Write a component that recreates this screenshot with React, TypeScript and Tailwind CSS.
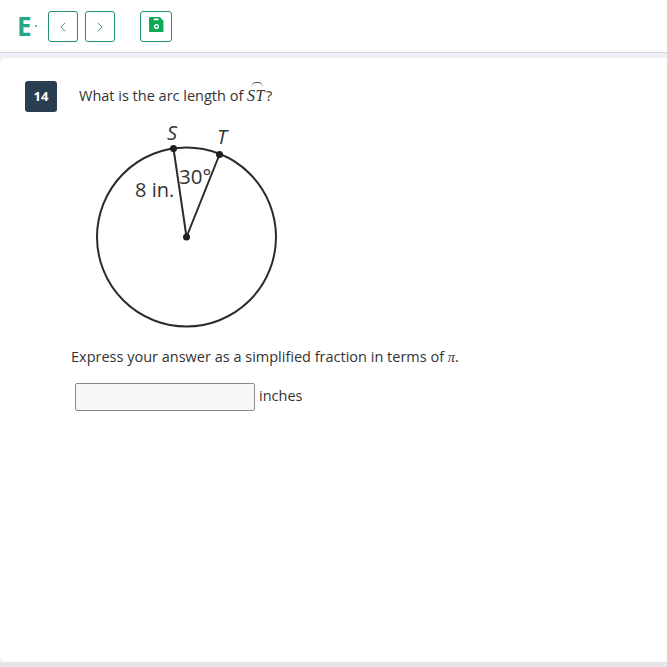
import { ChevronLeft, ChevronRight } from 'lucide-react';

function SaveIcon() {
  return (
    <svg width="15" height="15" viewBox="0 0 14 14">
      <path fillRule="evenodd" fill="#0fa958" d="M1 0h9l3.500 3.500v9.500a1 1 0 0 1-1 1H1a1 1 0 0 1-1-1V1a1 1 0 0 1 1-1zM4.500 1.300v1.700h4.500V1.300zM7 6.500a2.400 2.400 0 1 0 0 4.800a2.400 2.400 0 0 0 0-4.800zM7 7.800a1.100 1.100 0 1 1 0 2.200a1.100 1.100 0 0 1 0-2.200z" />
    </svg>
  );
}

function Diagram() {
  return (
    <svg width="200" height="216" viewBox="0 -6 200 216" className="block">
      <circle cx="106.500" cy="115" r="89.500" fill="none" stroke="#2b2b2b" strokeWidth="2" />
      <path d="M93.500 26.500 L106.500 115 L139.500 32.500" fill="none" stroke="#2b2b2b" strokeWidth="2" />
      <circle cx="93.500" cy="26.500" r="3.500" fill="#1f1f1f" />
      <circle cx="139.500" cy="32.500" r="3.500" fill="#1f1f1f" />
      <circle cx="106.500" cy="115" r="3.500" fill="#1f1f1f" />
      <text x="87" y="18" fontSize="20" fontStyle="italic" fill="#333" fontFamily="'Open Sans', sans-serif">S</text>
      <text x="137" y="22" fontSize="20" fontStyle="italic" fill="#333" fontFamily="'Open Sans', sans-serif">T</text>
      <text x="55" y="75" fontSize="20" fill="#333" fontFamily="'Open Sans', sans-serif">8 in.</text>
      <text x="99" y="62" fontSize="20.500" fill="#333" fontFamily="'Open Sans', sans-serif">30°</text>
    </svg>
  );
}

export default function App() {
  return (
    <div className="h-[667px] w-[667px] flex flex-col overflow-hidden bg-[#f0eff5] font-['Open_Sans',sans-serif] text-[#333333]">
      {/* Top bar */}
      <div className="h-[53px] shrink-0 flex items-center bg-white border-b border-[#d6d6dc] pl-[17px] pb-[1px]">
        <span className="text-[26px] leading-none font-bold text-[#22a884] w-[14px]">E</span>
        <span className="w-[2px] h-[2px] ml-[4px] rounded-full bg-[#22a884]" />
        <div className="flex gap-[7px] ml-[11px] mt-[1px]">
          <button className="w-[30px] h-[31px] flex items-center justify-center rounded-[3px] border border-[#1f8f6f] text-[#4f9c86]">
            <ChevronLeft size={16} strokeWidth={1.5} className="mt-[1px]" />
          </button>
          <button className="w-[30px] h-[31px] flex items-center justify-center rounded-[3px] border border-[#1f8f6f] text-[#4f9c86]">
            <ChevronRight size={16} strokeWidth={1.5} className="mt-[1px]" />
          </button>
        </div>
        <button className="w-[32px] h-[31px] mt-[1px] ml-[25px] flex items-center justify-center rounded-[3px] border border-[#1f8f6f] pb-[3px]">
          <SaveIcon />
        </button>
      </div>

      {/* Question card */}
      <div className="mt-[5px] h-[604px] shrink-0 bg-white rounded-l-[6px] pt-[23px]">
        <div className="flex items-center pl-[25px]">
          <div className="w-[32px] h-[31px] flex items-center justify-center rounded-[3px] bg-[#2b3e50] text-white text-[13px] font-bold">14</div>
          <p className="ml-[22px] mb-[2px] text-[14.500px] leading-[20px]">
            What is the arc length of{' '}
            <span className="relative font-['Liberation_Serif',serif] italic text-[16px] tracking-[0.5px] mr-[1px]">
              ST
              <span className="absolute left-[4px] top-[-5px] w-[12px] h-[5px] rounded-t-full border-t border-[#555555]" />
            </span>
            ?
          </p>
        </div>
        <div className="ml-[80px] mt-[4px]">
          <Diagram />
        </div>
        <p className="ml-[71px] mt-[15px] text-[14.500px] leading-[20px]">
          Express your answer as a simplified fraction in terms of{' '}
          <span className="font-['Liberation_Serif',serif] italic">π</span>.
        </p>
        <div className="flex items-center ml-[75px] mt-[16px]">
          <div className="w-[180px] h-[28px] rounded-[2px] border border-[#8a8a8a] bg-[#f7f7f7]" />
          <span className="ml-[4px] mb-[2px] text-[14.500px] leading-[20px]">inches</span>
        </div>
      </div>
      <div className="flex-1 bg-[#e6e6ea]" />
    </div>
  );
}
